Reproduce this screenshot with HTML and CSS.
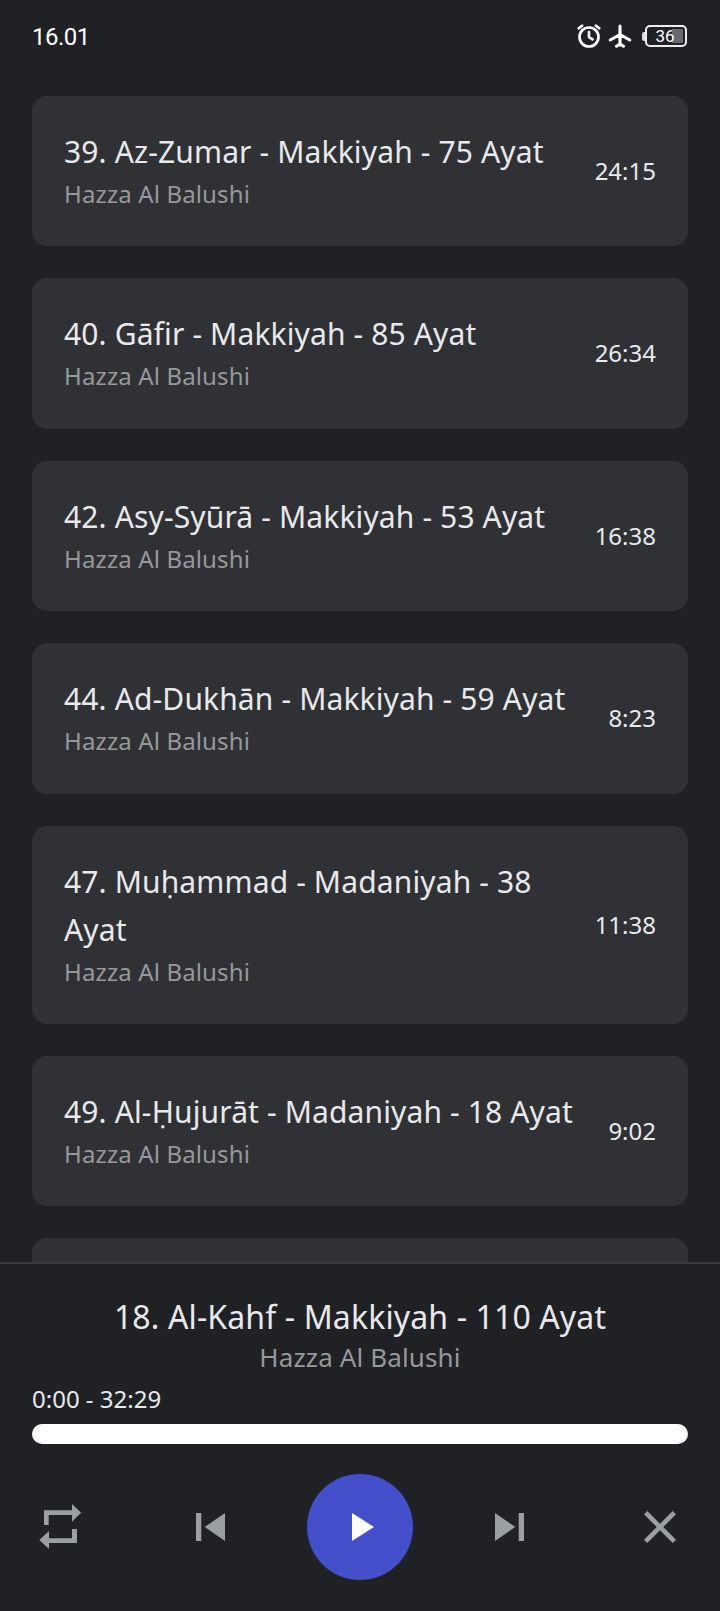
FILE: index.html
```html
<!DOCTYPE html>
<html lang="id">
<head>
  <meta charset="UTF-8">
  <title>Murottal</title>
  <link rel="stylesheet" href="styles.css">
</head>
<body>
  <!-- status bar -->
  <header class="statusbar">
    <span class="clock">16.01</span>
    <div class="status-icons">
      <svg class="icon-alarm" viewBox="0 0 24 24"><circle cx="12" cy="13" r="9.500"/><path d="M12 8V13l3.500 2.300M1.800 4.300L5 1.700M22.200 4.300L19 1.700"/></svg>
      <svg class="icon-plane" viewBox="0 0 24 24"><path d="M12 2v19M12 10.500L2.300 16M12 10.500l9.700 5.500M12 20l-3.500 2.200M12 20l3.500 2.200"/></svg>
      <div class="battery"><span>36</span></div>
    </div>
  </header>

  <!-- surah list -->
  <main class="list">
    <article class="card">
      <div class="info"><h2>39. Az-Zumar - Makkiyah - 75 Ayat</h2><p>Hazza Al Balushi</p></div>
      <span class="time">24:15</span>
    </article>
    <article class="card">
      <div class="info"><h2>40. Gāfir - Makkiyah - 85 Ayat</h2><p>Hazza Al Balushi</p></div>
      <span class="time">26:34</span>
    </article>
    <article class="card">
      <div class="info"><h2>42. Asy-Syūrā - Makkiyah - 53 Ayat</h2><p>Hazza Al Balushi</p></div>
      <span class="time">16:38</span>
    </article>
    <article class="card">
      <div class="info"><h2>44. Ad-Dukhān - Makkiyah - 59 Ayat</h2><p>Hazza Al Balushi</p></div>
      <span class="time">8:23</span>
    </article>
    <article class="card">
      <div class="info"><h2>47. Muḥammad - Madaniyah - 38 Ayat</h2><p>Hazza Al Balushi</p></div>
      <span class="time">11:38</span>
    </article>
    <article class="card">
      <div class="info"><h2>49. Al-Ḥujurāt - Madaniyah - 18 Ayat</h2><p>Hazza Al Balushi</p></div>
      <span class="time">9:02</span>
    </article>
    <article class="card"></article>
  </main>

  <!-- player -->
  <footer class="player">
    <h2 class="now-title">18. Al-Kahf - Makkiyah - 110 Ayat</h2>
    <p class="now-artist">Hazza Al Balushi</p>
    <div class="now-time">0:00 - 32:29</div>
    <div class="progress"></div>
    <div class="controls">
      <button type="button" aria-label="Repeat"><svg viewBox="0 0 56 56"><path d="M12 11.300H40V5l9.200 8.700-9.200 9V16H16.700v10H12zM45 44H17v6l-9.700-9L17 32v7.300h23V30h5z"/></svg></button>
      <button type="button" aria-label="Previous"><svg viewBox="0 0 56 56"><path d="M14 14h5.300v28H14zM43 14v28L22.700 28z"/></svg></button>
      <button type="button" class="play" aria-label="Play"><svg viewBox="0 0 56 56"><path d="M20 14v28l22-14z"/></svg></button>
      <button type="button" aria-label="Next"><svg viewBox="0 0 56 56"><path d="M36.700 14H42v28h-5.300zM13 14v28l20.300-14z"/></svg></button>
      <button type="button" aria-label="Close"><svg viewBox="0 0 56 56"><path d="M12 15.300l3.300-3.300L28 24.700 40.700 12l3.300 3.300L31.300 28 44 40.700 40.700 44 28 31.300 15.300 44 12 40.700 24.700 28z"/></svg></button>
    </div>
  </footer>
</body>
</html>
```
FILE: styles.css
```css
* { box-sizing: border-box; margin: 0; padding: 0; }
body {
  height: 1611px;
  display: flex;
  flex-direction: column;
  overflow: hidden;
  background: #202125;
  color: #e9e9ec;
  font-family: "Noto Sans", sans-serif;
}
h2 { font-size: 30px; line-height: 48px; font-weight: 400; letter-spacing: 0.13px; }

.statusbar { height: 72px; flex: none; display: flex; align-items: center; justify-content: space-between; padding: 0 33px 0 32px; font-family: Roboto, sans-serif; color: #fff; }
.clock { font-size: 24px; letter-spacing: -0.5px; padding-top: 2px; }
.status-icons { display: flex; align-items: center; }
.status-icons svg { width: 24px; height: 24px; fill: none; stroke: #fff; stroke-width: 2.700; stroke-linecap: round; stroke-linejoin: round; }
.status-icons .icon-plane { margin: 0 13px 0 7px; stroke-width: 3.100; }
.battery { position: relative; width: 42px; height: 22px; border: 2px solid #eee; border-radius: 5px; font-size: 17px; line-height: 19px; padding-right: 2px; text-align: center; background: linear-gradient(#68696c, #68696c) right 2px center / 11px 14px no-repeat; }
.battery::before { content: ""; position: absolute; left: -5px; top: 5px; width: 3px; height: 9px; border-radius: 2px 0 0 2px; background: #ddd; }

.list { flex: 1; min-height: 0; overflow: hidden; padding: 24px 32px 0; }
.card { display: flex; align-items: center; justify-content: space-between; min-height: 150.4px; margin-bottom: 32px; padding: 32px 32px 34.4px; background: #303135; border-radius: 15px; }
.card p { font-size: 24px; line-height: 36px; letter-spacing: 0.13px; color: #97989b; }
.time { font-size: 24px; padding: 1px 0 0 20px; }

.player { height: 349px; flex: none; border-top: 2px solid #3c3d41; padding: 29px 32px 0; }
.now-title, .now-artist { text-align: center; }
.now-title { font-size: 32px; }
.now-artist { font-size: 26px; line-height: 34px; margin-top: -1px; letter-spacing: 0.13px; color: #97989b; }
.now-time { font-size: 24px; line-height: 36px; margin-top: 7px; }
.progress { height: 20px; margin-top: 7px; border-radius: 10px; background: #fff; }
.controls { display: flex; align-items: center; justify-content: space-between; margin-top: 30px; }
.controls button { width: 56px; height: 56px; border: 0; background: none; display: flex; align-items: center; justify-content: center; }
.controls svg { width: 56px; height: 56px; fill: #9a9fa2; }
.controls .play { width: 106px; height: 106px; margin: 0 -25px; border-radius: 50%; background: #444fcc; }
.controls .play svg { fill: #fff; }
```
